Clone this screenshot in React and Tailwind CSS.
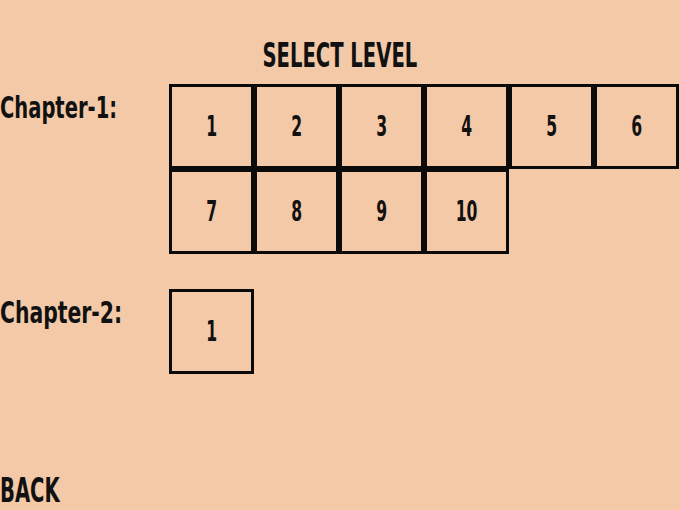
export default function App() {
  const ch1 = [1, 2, 3, 4, 5, 6, 7, 8, 9, 10];
  const box =
    "w-[85px] h-[85px] border-[3px] border-[#0b0b0b] flex items-center justify-center";
  const num = "inline-block scale-x-[0.62] text-[28px] leading-none";
  return (
    <div className="w-[680px] h-[510px] bg-[#f3c9a7] text-[#111] font-bold font-['DejaVu_Sans_Condensed','DejaVu_Sans',sans-serif] flex flex-col overflow-hidden">
      <h1 className="mt-[38px] h-[46px] text-center text-[34px] leading-[34px]">
        <span className="inline-block scale-x-[0.64]">SELECT LEVEL</span>
      </h1>
      <div className="flex">
        <div className="w-[169px] pt-[8px] text-[31px] leading-[31px]">
          <span className="inline-block origin-left scale-x-[0.7]">Chapter-1:</span>
        </div>
        <div className="grid grid-cols-[repeat(6,85px)]">
          {ch1.map((n) => (
            <div key={n} className={box}>
              <span className={num}>{n}</span>
            </div>
          ))}
        </div>
      </div>
      <div className="flex mt-[35px]">
        <div className="w-[169px] pt-[8px] text-[31px] leading-[31px]">
          <span className="inline-block origin-left scale-x-[0.73]">Chapter-2:</span>
        </div>
        <div className={box}>
          <span className={num}>1</span>
        </div>
      </div>
      <div className="mt-auto mb-[3px] text-[33px] leading-[33px]">
        <span className="inline-block origin-left scale-x-[0.66]">BACK</span>
      </div>
    </div>
  );
}
